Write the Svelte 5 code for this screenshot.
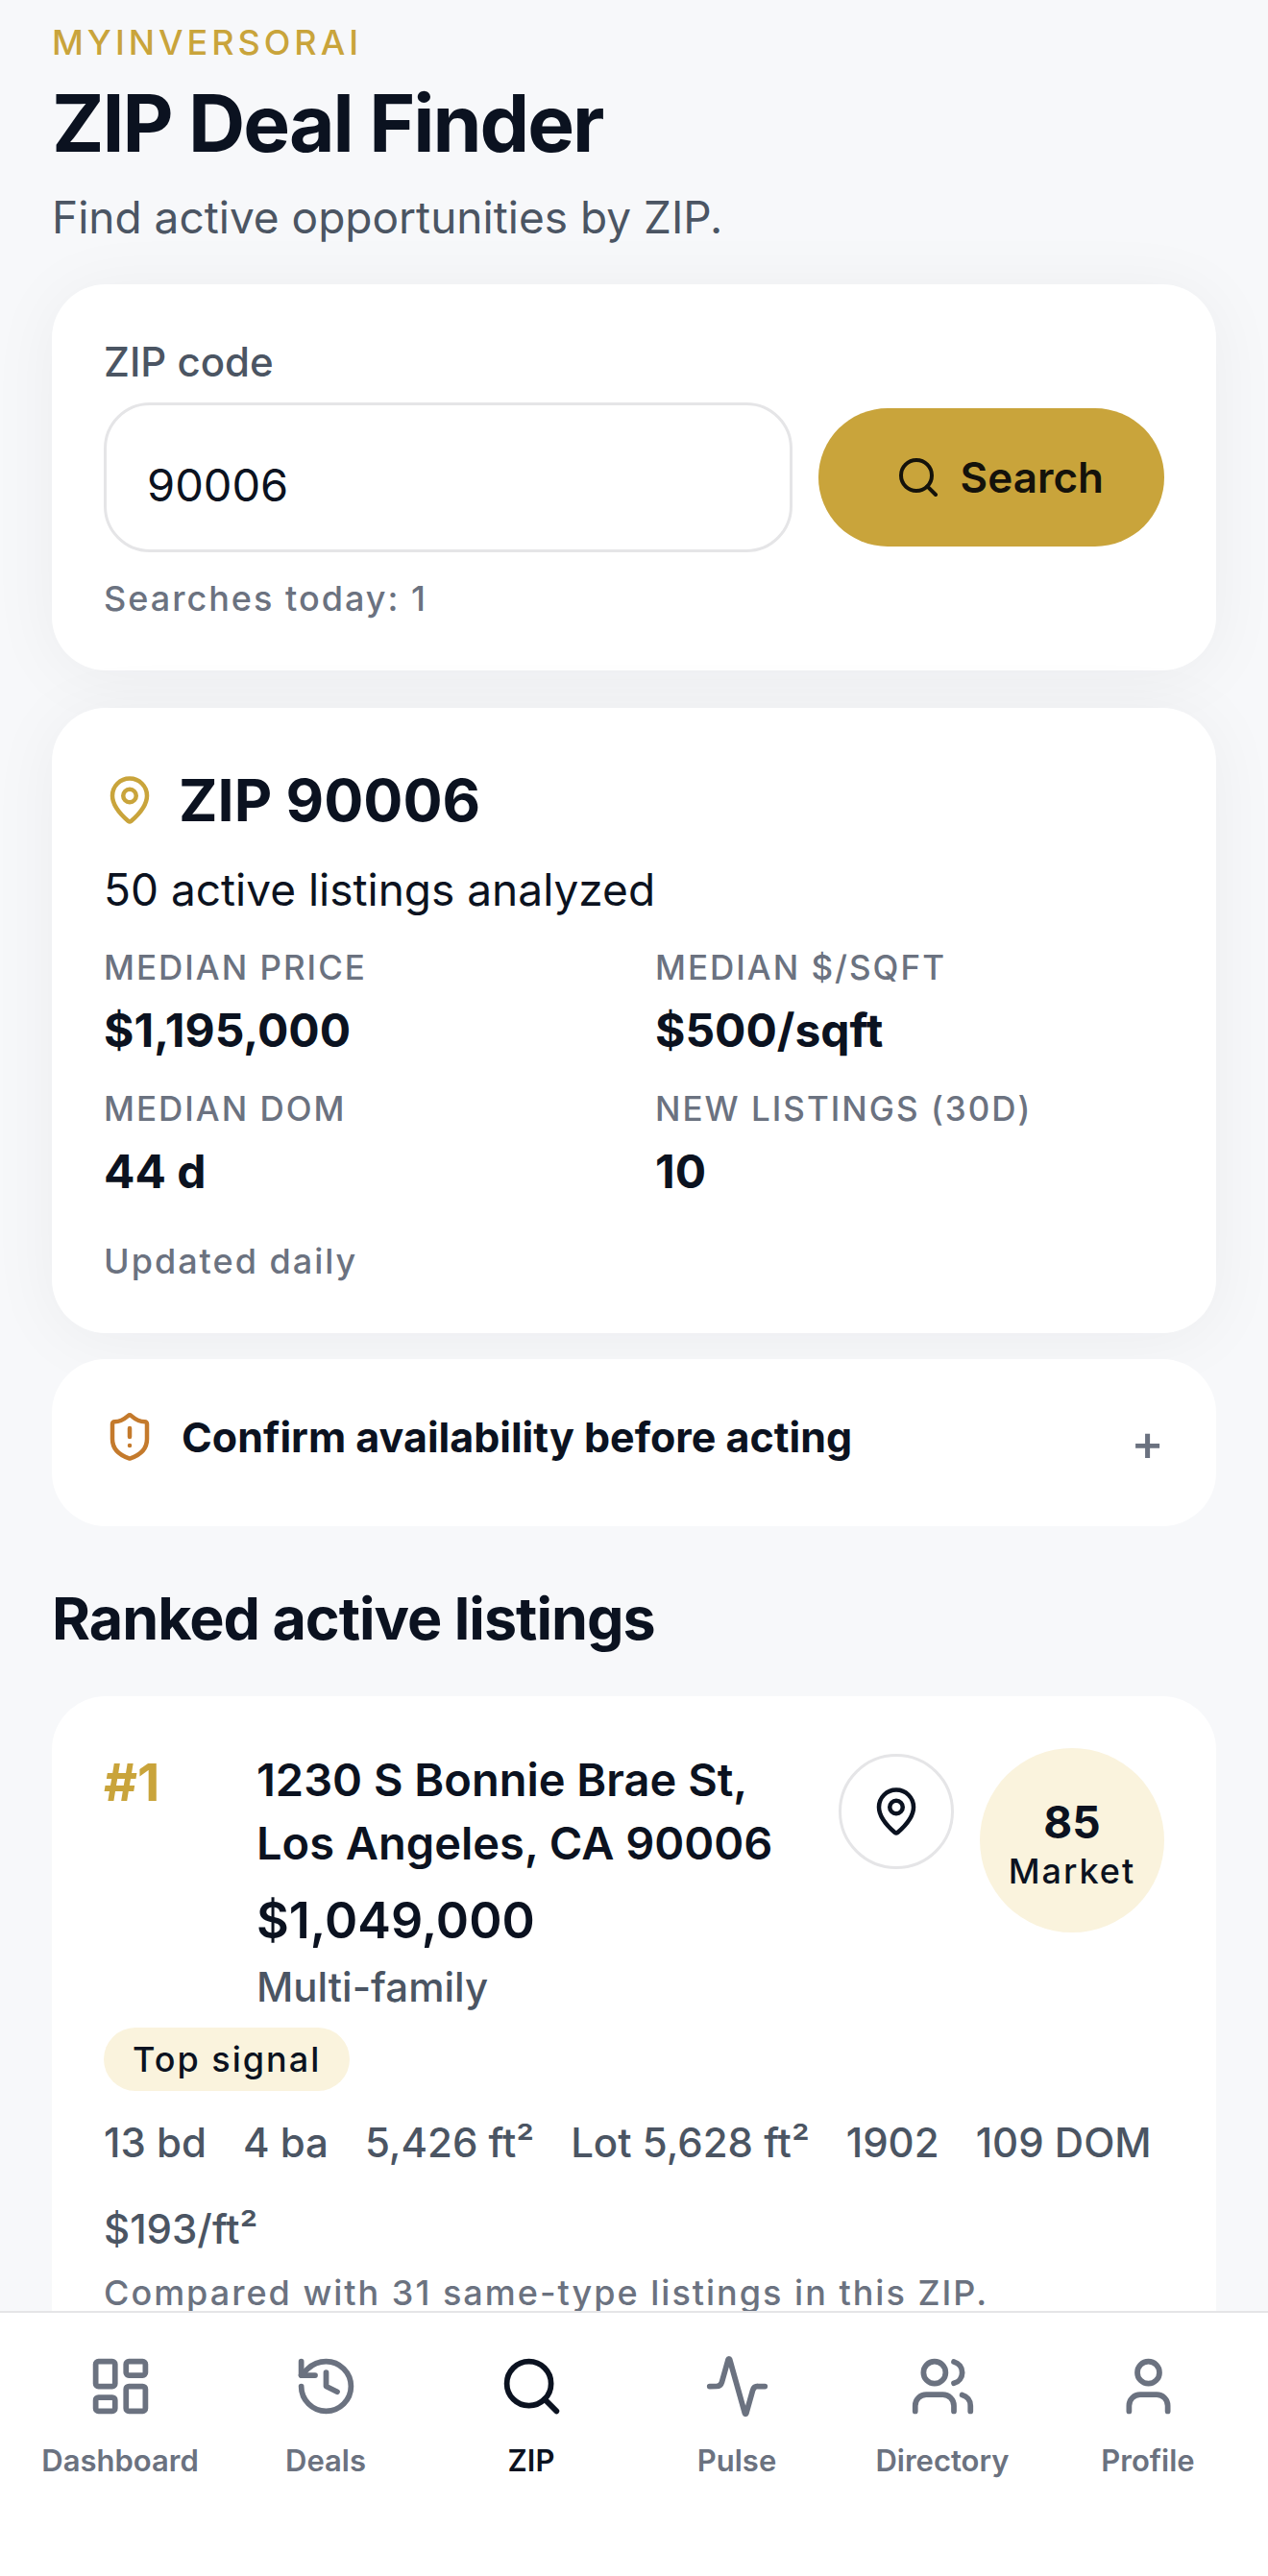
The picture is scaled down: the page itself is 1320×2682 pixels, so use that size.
<script>
    let zip = '90006';
    let searchedZip = '90006';
    let searches = 1;
    let noticeOpen = false;

    const stats = [
        { label: 'Median price', value: '$1,195,000' },
        { label: 'Median $/sqft', value: '$500/sqft' },
        { label: 'Median DOM', value: '44 d' },
        { label: 'New listings (30d)', value: '10' }
    ];

    const facts = ['13 bd', '4 ba', '5,426 ft²', 'Lot 5,628 ft²', '1902', '109 DOM', '$193/ft²'];

    // Icon paths are on a 24x24 grid
    const tabs = [
        {
            name: 'Dashboard',
            paths: [
                'M4 3h5a1 1 0 0 1 1 1v7a1 1 0 0 1-1 1H4a1 1 0 0 1-1-1V4a1 1 0 0 1 1-1z',
                'M15 3h5a1 1 0 0 1 1 1v3a1 1 0 0 1-1 1h-5a1 1 0 0 1-1-1V4a1 1 0 0 1 1-1z',
                'M15 12h5a1 1 0 0 1 1 1v7a1 1 0 0 1-1 1h-5a1 1 0 0 1-1-1v-7a1 1 0 0 1 1-1z',
                'M4 16h5a1 1 0 0 1 1 1v3a1 1 0 0 1-1 1H4a1 1 0 0 1-1-1v-3a1 1 0 0 1 1-1z'
            ]
        },
        {
            name: 'Deals',
            paths: ['M3 12a9 9 0 1 0 9-9 9.75 9.75 0 0 0-6.74 2.74L3 8', 'M3 3v5h5', 'M12 7v5l4 2']
        },
        {
            name: 'ZIP',
            paths: ['M19 11a8 8 0 1 1-16 0 8 8 0 0 1 16 0z', 'm21 21-4.34-4.34']
        },
        {
            name: 'Pulse',
            paths: ['M22 12h-2.48a2 2 0 0 0-1.93 1.46l-2.35 8.36a.25.25 0 0 1-.48 0L9.24 2.18a.25.25 0 0 0-.48 0l-2.35 8.36A2 2 0 0 1 4.49 12H2']
        },
        {
            name: 'Directory',
            paths: [
                'M16 21v-2a4 4 0 0 0-4-4H6a4 4 0 0 0-4 4v2',
                'M13 7a4 4 0 1 1-8 0 4 4 0 0 1 8 0z',
                'M22 21v-2a4 4 0 0 0-3-3.87',
                'M16 3.13a4 4 0 0 1 0 7.75'
            ]
        },
        {
            name: 'Profile',
            paths: ['M19 21v-2a4 4 0 0 0-4-4H9a4 4 0 0 0-4 4v2', 'M16 7a4 4 0 1 1-8 0 4 4 0 0 1 8 0z']
        }
    ];

    let activeTab = 'ZIP';

    function search(event) {
        event.preventDefault();
        if (zip) {
            searchedZip = zip;
            searches += 1;
        }
    }
</script>

{#snippet pin()}
    <svg class="icon" viewBox="0 0 24 24" aria-hidden="true">
        <path d="M20 10c0 4.99-5.54 10.19-7.4 11.8a1 1 0 0 1-1.2 0C9.54 20.19 4 14.99 4 10a8 8 0 0 1 16 0" />
        <circle cx="12" cy="10" r="3" />
    </svg>
{/snippet}

<div class="app">
    <main>
        <header>
            <p class="eyebrow">MyInversorAI</p>
            <h1>ZIP Deal Finder</h1>
            <p class="intro">Find active opportunities by ZIP.</p>
        </header>

        <form class="card raised" on:submit={search}>
            <label for="zip">ZIP code</label>
            <div class="searchRow">
                <input type="text" id="zip" name="zip" inputmode="numeric" bind:value={zip}>
                <button type="submit" class="searchButton">
                    <svg class="icon small" viewBox="0 0 24 24" aria-hidden="true">
                        <circle cx="11" cy="11" r="8" />
                        <path d="m21 21-4.34-4.34" />
                    </svg>
                    Search
                </button>
            </div>
            <p class="caption">Searches today: {searches}</p>
        </form>

        <section class="card raised summary">
            <div class="zipTitle">
                {@render pin()}
                <h2>ZIP {searchedZip}</h2>
            </div>
            <p class="analyzed">50 active listings analyzed</p>
            <dl>
                {#each stats as stat}
                    <div class="stat">
                        <dt>{stat.label}</dt>
                        <dd>{stat.value}</dd>
                    </div>
                {/each}
            </dl>
            <p class="caption">Updated daily</p>
        </section>

        <button class="card notice" aria-expanded={noticeOpen} on:click={() => noticeOpen = !noticeOpen}>
            <svg class="icon" viewBox="0 0 24 24" aria-hidden="true">
                <path d="M20 13c0 5-3.5 7.5-7.66 8.95a1 1 0 0 1-.67-.01C7.5 20.5 4 18 4 13V6a1 1 0 0 1 1-1c2 0 4.5-1.2 6.24-2.72a1.17 1.17 0 0 1 1.52 0C14.51 3.81 17 5 19 5a1 1 0 0 1 1 1z" />
                <path d="M12 8v4" />
                <path d="M12 16h.01" />
            </svg>
            <span class="noticeText">Confirm availability before acting</span>
            <span class="toggle">{noticeOpen ? '−' : '+'}</span>
        </button>

        <h2 class="sectionTitle">Ranked active listings</h2>

        <article class="card listing">
            <div class="listingTop">
                <span class="rank">#1</span>
                <div class="details">
                    <h3>1230 S Bonnie Brae St, Los Angeles, CA 90006</h3>
                    <p class="price">$1,049,000</p>
                    <p class="type">Multi-family</p>
                </div>
                <button class="mapButton" aria-label="Map">{@render pin()}</button>
                <div class="score">
                    <strong>85</strong>
                    <span>Market</span>
                </div>
            </div>
            <span class="pill">Top signal</span>
            <ul class="facts">
                {#each facts as fact}
                    <li>{fact}</li>
                {/each}
            </ul>
            <p class="caption">Compared with 31 same-type listings in this ZIP.</p>
        </article>
    </main>

    <nav>
        {#each tabs as tab}
            <a href="#{tab.name.toLowerCase()}" class:active={tab.name === activeTab} on:click={() => activeTab = tab.name}>
                <svg class="icon large" viewBox="0 0 24 24" aria-hidden="true">
                    {#each tab.paths as d}
                        <path {d} />
                    {/each}
                </svg>
                {tab.name}
            </a>
        {/each}
    </nav>
</div>

<style>
    .app {
        display: flex;
        flex-direction: column;
        height: 100vh;
        background: #f7f8fa;
        color: #0b1220;
        font-family: Inter, "Liberation Sans", sans-serif;
        font-size: 46px;
        line-height: 66px;
    }

    main {
        flex: 1;
        min-height: 0;
        overflow-y: auto;
        scrollbar-width: none;
        padding: 20px 54px 54px;
    }

    h1, h2, h3, p, dl, dd, ul {
        margin: 0;
        padding: 0;
    }

    button, input {
        font: inherit;
        color: inherit;
        box-sizing: border-box;
    }

    button {
        border: none;
        cursor: pointer;
    }

    .icon {
        display: block;
        flex: none;
        width: 54px;
        height: 54px;
        fill: none;
        stroke: currentColor;
        stroke-width: 2;
        stroke-linecap: round;
        stroke-linejoin: round;
    }
    .icon.small {
        width: 48px;
        height: 48px;
    }
    .icon.large {
        width: 69px;
        height: 69px;
    }

    header {
        display: flex;
        flex-direction: column;
        gap: 16px;
        margin-bottom: 34px;
    }
    .eyebrow {
        color: #c9a43b;
        font-size: 36px;
        font-weight: 500;
        line-height: 48px;
        letter-spacing: 4px;
        text-transform: uppercase;
    }
    h1 {
        font-size: 82px;
        font-weight: 700;
        line-height: 90px;
        letter-spacing: -2px;
    }
    .intro {
        color: #4b5563;
        line-height: 72px;
    }

    .card {
        background: #fff;
        border-radius: 56px;
        padding: 54px;
    }
    .raised {
        box-shadow: 0 6px 72px rgba(15, 18, 32, 0.05);
    }

    .caption {
        color: #6b7280;
        font-size: 36px;
        font-weight: 500;
        line-height: 42px;
        letter-spacing: 2px;
    }

    label {
        display: block;
        color: #4b5563;
        font-size: 42px;
        font-weight: 500;
        line-height: 54px;
        margin-bottom: 15px;
    }
    .searchRow {
        display: flex;
        align-items: center;
        gap: 27px;
        margin-bottom: 27px;
    }
    input {
        flex: 1;
        min-width: 0;
        height: 156px;
        padding: 15px 42px 0;
        border: 3px solid #e5e5e7;
        border-radius: 48px;
        background: #fff;
        font-size: 47px;
    }
    .searchButton {
        display: flex;
        align-items: center;
        gap: 20px;
        height: 144px;
        padding: 0 63px 0 80px;
        border-radius: 72px;
        background: #c9a43b;
        color: #14120b;
        font-size: 44px;
        font-weight: 600;
    }

    .summary {
        margin: 39px 0 27px;
    }
    .zipTitle {
        display: flex;
        align-items: center;
        gap: 24px;
        margin-bottom: 18px;
    }
    .zipTitle .icon {
        color: #c9a43b;
    }
    h2 {
        font-size: 61px;
        font-weight: 700;
        line-height: 84px;
    }
    .analyzed {
        margin-bottom: 24px;
    }
    dl {
        display: grid;
        grid-template-columns: 1fr 1fr;
        gap: 24px 44px;
        margin-bottom: 39px;
    }
    dt {
        color: #6b7280;
        font-size: 35px;
        font-weight: 500;
        line-height: 48px;
        letter-spacing: 2px;
        text-transform: uppercase;
        margin-bottom: 9px;
    }
    dd {
        font-size: 48px;
        font-weight: 700;
    }

    .notice {
        display: flex;
        align-items: flex-start;
        gap: 27px;
        width: 100%;
        text-align: left;
    }
    .notice .icon {
        color: #c47a2c;
    }
    .noticeText {
        flex: 1;
        font-size: 43px;
        font-weight: 700;
        line-height: 54px;
    }
    .toggle {
        color: #6b7280;
        font-size: 52px;
        font-weight: 500;
    }

    .sectionTitle {
        margin: 54px 0 39px;
        letter-spacing: -1px;
    }

    .listingTop {
        display: flex;
        align-items: flex-start;
        gap: 27px;
        margin-bottom: 15px;
    }
    .rank {
        flex: none;
        width: 132px;
        color: #c9a43b;
        font-size: 54px;
        font-weight: 700;
        line-height: 72px;
    }
    .details {
        flex: 1;
    }
    h3 {
        font-size: 47px;
        font-weight: 600;
        line-height: 66px;
        margin-bottom: 12px;
    }
    .price {
        font-size: 52px;
        font-weight: 600;
        line-height: 72px;
        margin-bottom: 6px;
    }
    .type {
        color: #4b5563;
        font-size: 42px;
        font-weight: 500;
        line-height: 54px;
    }
    .mapButton {
        display: grid;
        place-items: center;
        flex: none;
        width: 120px;
        height: 120px;
        margin-top: 6px;
        padding: 0;
        border: 3px solid #e5e5e7;
        border-radius: 50%;
        background: #fff;
    }
    .score {
        display: flex;
        flex-direction: column;
        align-items: center;
        justify-content: center;
        box-sizing: border-box;
        flex: none;
        width: 192px;
        height: 192px;
        padding-top: 9px;
        border-radius: 50%;
        background: #faf3dd;
        line-height: 54px;
    }
    .score span {
        font-size: 36px;
        font-weight: 500;
        line-height: 48px;
        letter-spacing: 2px;
    }
    .pill {
        display: inline-block;
        padding: 0 30px;
        border-radius: 33px;
        background: #faf3dd;
        font-size: 36px;
        font-weight: 500;
        letter-spacing: 2px;
        vertical-align: top;
    }
    .facts {
        display: flex;
        flex-wrap: wrap;
        gap: 36px 38px;
        margin: 27px 0 18px;
        color: #4b5563;
        font-size: 42px;
        font-weight: 500;
        line-height: 54px;
        list-style: none;
    }

    nav {
        display: flex;
        box-sizing: border-box;
        height: 276px;
        padding: 42px 18px 0;
        border-top: 2px solid #e5e5e7;
        background: #fff;
    }
    nav a {
        display: flex;
        flex: 1;
        flex-direction: column;
        align-items: center;
        gap: 22px;
        color: #6b7280;
        font-size: 31px;
        font-weight: 600;
        line-height: 42px;
        text-decoration: none;
    }
    nav a.active {
        color: #0b1220;
    }
</style>
